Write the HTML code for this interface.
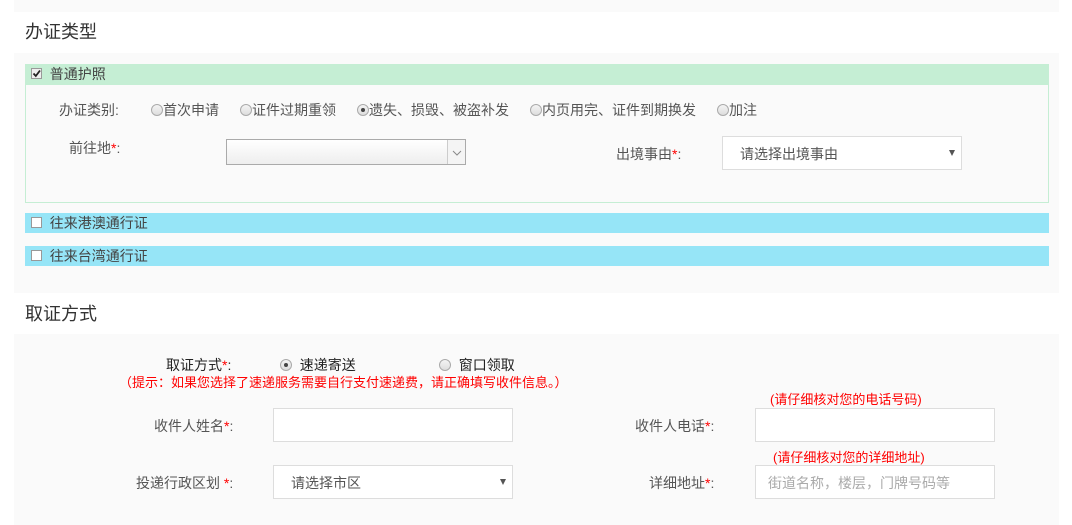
<!DOCTYPE html>
<html><head><meta charset="utf-8"><style>
*{margin:0;padding:0;box-sizing:border-box}
body{width:1072px;height:525px;background:#fff;position:relative;overflow:hidden;font-family:"Liberation Sans","Noto Sans CJK SC",sans-serif;color:#555;font-size:14px;line-height:16px}
.a{position:absolute;white-space:nowrap}
.pan{position:absolute;background:#fafafa;left:14px;width:1045px}
.h{font-size:18px;color:#333;line-height:20px}
.r{display:inline-block;width:12px;height:12px;border-radius:50%;border:1px solid #aaa;background:linear-gradient(#f4f4f4,#ddd);vertical-align:-1px;position:relative}
.r.on::after{content:"";position:absolute;left:3px;top:3px;width:4px;height:4px;border-radius:50%;background:#444}
.cb{display:inline-block;width:11px;height:11px;border:1px solid #999;background:#eee;vertical-align:0;position:relative}
.box{position:absolute;background:#fff;border:1px solid #ddd}
.red{color:#f00}
.arr{position:absolute;right:6px;top:10px;width:0;height:0;border-left:3.5px solid transparent;border-right:3.5px solid transparent;border-top:6px solid #555}
</style></head><body>
<div class="pan" style="top:0;height:12px"></div>
<div class="a h" style="left:25px;top:22px">办证类型</div>
<div class="pan" style="top:53px;height:240px"></div>
<div class="a" style="left:25px;top:64px;width:1024px;height:139px;border:1px solid #c5eed4"></div>
<div class="a" style="left:25px;top:64px;width:1024px;height:21px;background:#c5eed4"></div>
<div class="a" style="left:31px;top:66px;color:#444"><span class="cb"><svg width="9" height="9" style="position:absolute;left:0;top:0"><path d="M1.5 4.5L3.8 7L8 1.5" stroke="#222" stroke-width="1.8" fill="none"/></svg></span>&nbsp; 普通护照</div>
<div class="a" style="left:59px;top:102px">办证类别:</div>
<div class="a" style="left:151px;top:102px"><span class="r"></span>首次申请</div>
<div class="a" style="left:240px;top:102px"><span class="r"></span>证件过期重领</div>
<div class="a" style="left:357px;top:102px"><span class="r on"></span>遗失、损毁、被盗补发</div>
<div class="a" style="left:530px;top:102px"><span class="r"></span>内页用完、证件到期换发</div>
<div class="a" style="left:717px;top:102px"><span class="r"></span>加注</div>
<div class="a" style="left:69px;top:140px">前往地<span class="red">*</span>:</div>
<div class="box" style="left:226px;top:139px;width:240px;height:26px;border-color:#aaa;background:linear-gradient(#fff,#eee)"><div style="position:absolute;right:0;top:0;width:18px;height:24px;border-left:1px solid #ccc;background:#f4f4f4"><svg width="18" height="24"><path d="M5 11l4 4 4-4" stroke="#888" fill="none"/></svg></div></div>
<div class="a" style="left:616px;top:146px">出境事由<span class="red">*</span>:</div>
<div class="box" style="left:722px;top:136px;width:240px;height:34px"><span class="a" style="left:17px;top:9px">请选择出境事由</span><div class="arr" style="top:13px"></div></div>
<div class="a" style="left:25px;top:213px;width:1024px;height:20px;background:#96e5f7"></div>
<div class="a" style="left:31px;top:215px;color:#444"><span class="cb" style="background:#fff"></span>&nbsp; 往来港澳通行证</div>
<div class="a" style="left:25px;top:246px;width:1024px;height:20px;background:#96e5f7"></div>
<div class="a" style="left:31px;top:248px;color:#444"><span class="cb" style="background:#fff"></span>&nbsp; 往来台湾通行证</div>
<div class="a h" style="left:25px;top:304px">取证方式</div>
<div class="pan" style="top:334px;height:191px"></div>
<div class="a" style="left:166px;top:357px;color:#222">取证方式<span class="red">*</span>:</div>
<div class="a" style="left:280px;top:357px;color:#222"><span class="r on"></span>&nbsp; 速递寄送</div>
<div class="a" style="left:439px;top:357px;color:#222"><span class="r"></span>&nbsp; 窗口领取</div>
<div class="a red" style="left:119px;top:375px;font-size:13px">（提示：如果您选择了速递服务需要自行支付速递费，请正确填写收件信息。）</div>
<div class="a" style="left:154px;top:418px">收件人姓名<span class="red">*</span>:</div>
<div class="box" style="left:273px;top:408px;width:240px;height:34px"></div>
<div class="a" style="left:136px;top:475px">投递行政区划 <span class="red">*</span>:</div>
<div class="box" style="left:273px;top:465px;width:240px;height:34px"><span class="a" style="left:17px;top:9px">请选择市区</span><div class="arr" style="top:13px"></div></div>
<div class="a red" style="left:770px;top:392px;font-size:13px">(请仔细核对您的电话号码)</div>
<div class="a" style="left:635px;top:418px">收件人电话<span class="red">*</span>:</div>
<div class="box" style="left:755px;top:408px;width:240px;height:34px"></div>
<div class="a red" style="left:773px;top:450px;font-size:13px">(请仔细核对您的详细地址)</div>
<div class="a" style="left:649px;top:475px">详细地址<span class="red">*</span>:</div>
<div class="box" style="left:755px;top:465px;width:240px;height:34px"><span class="a" style="left:12px;top:9px;color:#aaa">街道名称，楼层，门牌号码等</span></div>
</body></html>
